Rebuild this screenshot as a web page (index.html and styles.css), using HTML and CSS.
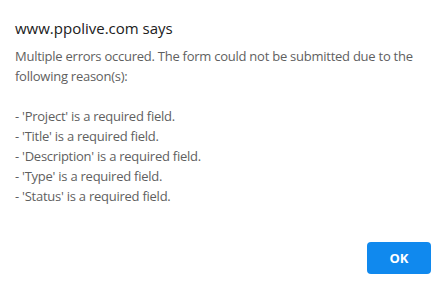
FILE: index.html
```html
<!DOCTYPE html>
<html lang="en">
<head>
<meta charset="utf-8">
<title>www.ppolive.com says</title>
<link rel="stylesheet" href="styles.css">
</head>
<body>
<div class="dialog">
  <div class="title">www.ppolive.com says</div>
  <div class="message">
    <p class="line">Multiple errors occured. The form could not be submitted due to the following reason(s):</p>
    <p class="blank">&nbsp;</p>
    <p class="line">- 'Project' is a required field.</p>
    <p class="line">- 'Title' is a required field.</p>
    <p class="line">- 'Description' is a required field.</p>
    <p class="line">- 'Type' is a required field.</p>
    <p class="line">- 'Status' is a required field.</p>
  </div>
  <div class="footer">
    <button class="ok">OK</button>
  </div>
</div>
</body>
</html>
```
FILE: styles.css
```css
html, body {
  margin: 0;
  padding: 0;
  background: #ffffff;
}
.dialog {
  box-sizing: border-box;
  width: 447px;
  height: 289px;
  padding: 18px 16px 15px 15px;
  display: flex;
  flex-direction: column;
  font-family: "Open Sans", "Noto Sans", sans-serif;
}
.title {
  font-size: 15px;
  line-height: 20px;
  color: #202020;
}
.message {
  margin-top: 8px;
  font-size: 13px;
  letter-spacing: -0.25px;
  line-height: 20px;
  color: #5f5f5f;
}
.message p {
  margin: 0;
}
.footer {
  margin-top: auto;
  display: flex;
  justify-content: flex-end;
}
.ok {
  width: 64px;
  height: 32px;
  border: none;
  border-radius: 4px;
  background: #1089ee;
  color: #ffffff;
  font-family: "Open Sans", "Noto Sans", sans-serif;
  font-size: 13px;
  font-weight: 700;
  padding: 0;
}
```
